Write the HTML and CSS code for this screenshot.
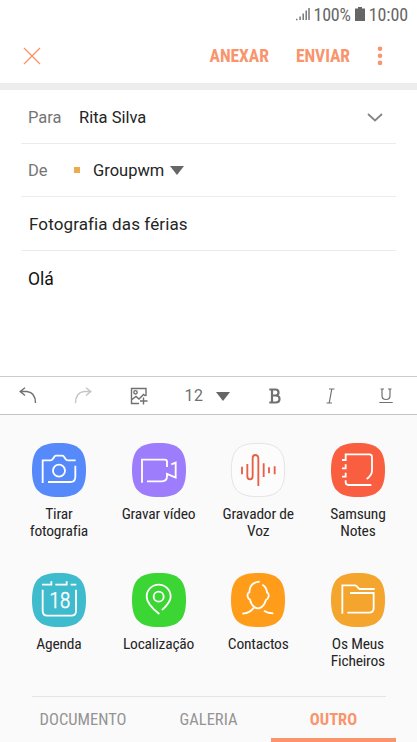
FILE: index.html
```html
<!DOCTYPE html>
<html lang="pt">
<head>
<meta charset="utf-8">
<title>Compor e-mail</title>
<link rel="stylesheet" href="styles.css">
</head>
<body>
<div class="status">
  <svg class="signal" width="15" height="14" viewBox="0 0 15 14"><path d="M1 12.5h1.5M5.1 13V9.500M8.200 13V6.500M11.200 13V3.500M14 13V1"/></svg>
  <span class="pct">100%</span>
  <svg class="battery" width="10" height="14" viewBox="0 0 10 14"><path d="M3 0h4v1.500h3V14H0V1.500h3z"/></svg>
  <span class="clock">10:00</span>
</div>
<header class="bar">
  <svg class="close" width="18" height="18" viewBox="0 0 18 18"><path d="M1 1l16 16M17 1L1 17"/></svg>
  <span class="action attach">ANEXAR</span>
  <span class="action send">ENVIAR</span>
  <svg class="more" width="6" height="20" viewBox="0 0 6 20"><circle cx="3" cy="2.700" r="2.300"/><circle cx="3" cy="9.800" r="2.300"/><circle cx="3" cy="16.900" r="2.300"/></svg>
</header>
<main class="form">
  <div class="row recipient"><span class="key">Para</span><span class="to">Rita Silva</span>
    <svg class="chev" width="16" height="9" viewBox="0 0 16 9"><path d="M1 1l7 6.500L15 1"/></svg></div>
  <div class="row"><span class="key">De</span><i class="dot"></i><span class="from">Groupwm</span><i class="tri"></i></div>
  <div class="row subject"><span>Fotografia das férias</span></div>
  <div class="body"><span>Olá</span></div>
</main>
<div class="tools">
  <span class="tool"><svg width="18" height="17" viewBox="0 0 18 17"><path d="M6 .8L1.200 4.500L6 8.500M1.500 4.500H8Q16.500 5.500 16.500 16"/></svg></span>
  <span class="tool faded"><svg width="18" height="17" viewBox="0 0 18 17"><path d="M12 .8l4.800 3.700L12 8.500M16.500 4.500H10Q1.500 5.500 1.500 16"/></svg></span>
  <span class="tool"><svg width="18" height="18" viewBox="0 0 18 18"><path d="M9 16.500H1.500V1.500h14.500V9M2 12.500l4-3 3 2.500 4.500-4.500 2 1.500M13.500 10.500v7M10 14h7.500"/><circle cx="5.500" cy="5.300" r="1.700"/></svg></span>
  <span class="tool size"><b>12</b><i class="tri"></i></span>
  <span class="tool"><svg width="12" height="16" viewBox="0 0 12 16"><path class="heavy" d="M.3 1.500H6.500Q9.500 1.500 9.500 4.500T6.500 7.500H3M6.500 7.500Q10.500 7.500 10.500 11T6.500 14.500H.3M3 1.500v13"/></svg></span>
  <span class="tool"><svg width="9" height="16" viewBox="0 0 9 16"><path class="thin" d="M3 1h5.500M.5 15H6M5.800 1L3.200 15"/></svg></span>
  <span class="tool"><svg width="14" height="16" viewBox="0 0 14 16"><path class="thin" d="M1.500 1H5M9 1h3.500M3 1v6.500Q3 11.500 7 11.500T11 7.500V1M.3 14.500h13.400"/></svg></span>
</div>
<section class="panel">
  <div class="grid">
    <div class="app"><svg class="icon blue" viewBox="66 38 162 162"><path class="tile" transform="translate(66 38)" d="M0 81C0 22 22 0 81 0S162 22 162 81 140 162 81 162 0 140 0 81z"/><path d="M98 158V90H121Q126 90 129 85L133 79Q135 76 139 76H156Q160 76 162 79L166 85Q169 90 174 90H197M196 106V139Q196 155 181 155H114"/><circle cx="147" cy="121" r="18"/></svg><span>Tirar<br>fotografia</span></div>
    <div class="app"><svg class="icon violet" viewBox="366 38 162 162"><path class="tile" transform="translate(366 38)" d="M0 81C0 22 22 0 81 0S162 22 162 81 140 162 81 162 0 140 0 81z"/><path d="M396 157V88H464Q471 88 471 95V110M484 102L497 97V142L471 131V138Q471 153 456 153H411"/></svg><span>Gravar vídeo</span></div>
    <div class="app"><svg class="icon white" viewBox="64 38 162 162"><path class="tile" transform="translate(64 38)" d="M1 81C1 22 22 1 81 1S161 22 161 81 140 161 81 161 1 140 1 81z"/><path d="M97 109V132M113 101V138Q113 147 121 147T129 138V83Q129 74 137 74T146 83V167M162 99V140M178 111V129M195 108V132"/></svg><span>Gravador de<br>Voz</span></div>
    <div class="app"><svg class="icon red" viewBox="363 38 162 162"><path class="tile" transform="translate(363 38)" d="M0 81C0 22 22 0 81 0S162 22 162 81 140 162 81 162 0 140 0 81z"/><path d="M396 89H407V72H478Q486 72 486 80V121Q486 134 470 146M396 114H407V102M396 139H407V127M407 150V156Q407 164 415 164H484"/></svg><span>Samsung<br>Notes</span></div>
    <div class="app"><svg class="icon teal" viewBox="66 38 162 162"><path class="tile" transform="translate(66 38)" d="M0 81C0 22 22 0 81 0S162 22 162 81 140 162 81 162 0 140 0 81z"/><path d="M96 73H124V63M136 73H170V63M182 73H199M98 88V152Q98 166 112 166H184Q198 166 198 152V88"/><text x="149" y="143">18</text></svg><span>Agenda</span></div>
    <div class="app"><svg class="icon green" viewBox="366 38 162 162"><path class="tile" transform="translate(366 38)" d="M0 81C0 22 22 0 81 0S162 22 162 81 140 162 81 162 0 140 0 81z"/><path d="M456 149Q482 125 482 109A36 36 0 0 0 410 109Q410 131 448 161"/><circle cx="446" cy="109" r="15"/></svg><span>Localização</span></div>
    <div class="app"><svg class="icon orange" viewBox="64 38 162 162"><path class="tile" transform="translate(64 38)" d="M0 81C0 22 22 0 81 0S162 22 162 81 140 162 81 162 0 140 0 81z"/><path d="M150 64Q120 66 119 96Q112 98 114 108Q115 116 121 118Q124 133 134 140Q145 148 156 140Q165 133 169 119Q175 117 177 108Q178 98 172 96Q171 81 158 73M98 160Q122 159 133 141M163 151Q173 158 191 159"/></svg><span>Contactos</span></div>
    <div class="app"><svg class="icon amber" viewBox="363 38 162 162"><path class="tile" transform="translate(363 38)" d="M0 81C0 22 22 0 81 0S162 22 162 81 140 162 81 162 0 140 0 81z"/><path d="M397 160V75H435Q439 75 442 80T449 86H494M420 98H491V143Q491 157 477 157H412"/></svg><span>Os Meus<br>Ficheiros</span></div>
  </div>
  <nav class="tabs"><span>DOCUMENTO</span><span>GALERIA</span><span class="active">OUTRO</span></nav>
</section>
</body>
</html>
```
FILE: styles.css
```css
* { box-sizing: border-box; }
body {
  margin: 0;
  width: 417px;
  height: 742px;
  display: flex;
  flex-direction: column;
  overflow: hidden;
  background: #fff;
  color: #252525;
  font-family: Roboto, sans-serif;
  font-size: 17px;
}
svg { display: block; flex: none; fill: none; }
.status, .action, .app, .tabs {
  font-family: "Roboto Condensed", Roboto, sans-serif;
  font-stretch: 75%;
}
.status {
  height: 28px;
  display: flex;
  align-items: center;
  justify-content: flex-end;
  padding-right: 9px;
  color: #666;
  font-size: 18px;
}
.pct { letter-spacing: -.2px; }
.clock { letter-spacing: -.1px; }
.signal { stroke: #777; stroke-width: 1.5; margin-right: 4px; }
.battery { fill: #666; margin: 0 4px 0 4px; }
.bar {
  height: 62px;
  border-bottom: 7px solid #ededed;
  display: flex;
  align-items: center;
  padding: 0 34px 0 23px;
  color: #f9946c;
}
.close { stroke: #f9946c; stroke-width: 1.3; margin-right: auto; }
.action { font-size: 17.5px; font-weight: 700; letter-spacing: -.05px; }
.attach { margin-right: 27px; }
.send { margin-right: 27px; }
.more { fill: #f9946c; }
.form { height: 285.5px; padding: 0 21px; }
.row {
  height: 53.5px;
  display: flex;
  align-items: center;
  border-bottom: 1px solid #ececec;
  padding: 1px 13px 0 7px;
}
.recipient { padding-top: 3px; }
.key { width: 51px; color: #757575; font-size: 16.5px; }
.to, .from { font-size: 16.5px; }
.chev { stroke: #858585; stroke-width: 1.8; margin-left: auto; }
.dot { width: 6px; height: 6px; margin: 0 13px 0 -5px; background: #e9ac50; }
.tri {
  margin-left: 6px;
  border: 7.5px solid transparent;
  border-top: 9px solid #666;
  border-bottom: 0;
}
.subject { padding-left: 8px; letter-spacing: .12px; }
.body { padding: 18px 7px; color: #111; font-size: 17.5px; }
.tools {
  height: 39.5px;
  display: flex;
  align-items: center;
  padding-top: 1px;
  border-top: 1px solid #ccc;
  border-bottom: 1px solid #c4c4c4;
}
.tool { width: 55.5px; display: flex; justify-content: center; }
.tool svg { stroke: #707070; stroke-width: 1.4; }
.tool.faded svg { stroke: #c5c5c5; }
.tool .heavy { stroke-width: 2.2; }
.tool .thin { stroke-width: 1.2; }
.size { width: 81px; align-items: center; color: #707070; }
.size b { font-size: 16px; font-weight: 400; letter-spacing: .6px; }
.size .tri { margin: 1px 0 0 12px; }
.panel { flex: 1; background: #fafafa; }
.grid {
  height: 281px;
  padding: 28px 9px 0;
  display: grid;
  grid-template-columns: repeat(4, 99.7px);
  grid-auto-rows: 130px;
}
.app {
  display: flex;
  flex-direction: column;
  align-items: center;
  text-align: center;
  font-size: 15.5px;
  letter-spacing: -.2px;
  line-height: 17.5px;
  white-space: nowrap;
}
.icon { width: 54px; height: 54px; margin-bottom: 8.5px; stroke: #fff; stroke-width: 5.5; overflow: visible; }
.tile { stroke: none; }
.blue .tile { fill: #568afb; }
.violet .tile { fill: #9d7dfb; }
.white { stroke: #e85f46; }
.white .tile { fill: #fcfcfc; stroke: #dedede; stroke-width: 2.5; }
.red .tile { fill: #fa5e40; }
.teal .tile { fill: #3fbbce; }
.green .tile { fill: #3bd534; }
.orange .tile { fill: #ff9c19; }
.amber .tile { fill: #f4a52d; }
.icon text { fill: #fff; stroke: #fff; stroke-width: 1.2; letter-spacing: -1px; font: 300 66px "Roboto Condensed", Roboto, sans-serif; font-stretch: 75%; text-anchor: middle; }
.tabs {
  height: 46px;
  margin: 0 31px 0 32px;
  border-top: 1.5px solid #e4e4e4;
  display: flex;
  color: #949494;
  font-size: 16.5px;
}
.tabs span { width: 102px; text-align: center; line-height: 45px; }
.tabs span + span { width: 125px; margin-left: 12px; }
.tabs .active {
  width: 125px;
  flex: none;
  margin: 0 -10px 0 0;
  color: #f9946c;
  font-weight: 700;
  border-bottom: 4px solid #f9946c;
}
```
